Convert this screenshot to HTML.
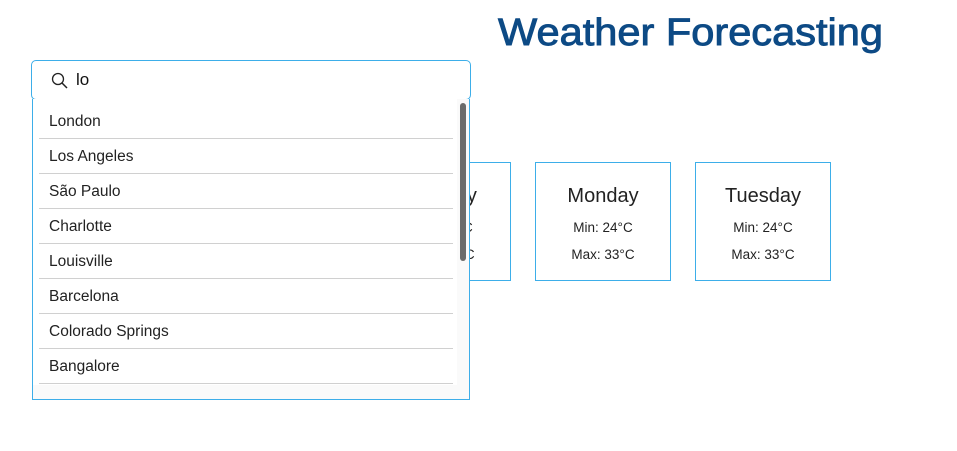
<!DOCTYPE html>
<html><head><meta charset="utf-8"><style>
*{box-sizing:border-box;margin:0;padding:0}
body{width:957px;height:451px;background:#fff;font-family:"Liberation Sans","DejaVu Sans",sans-serif;color:#222;position:relative;overflow:hidden}
.card{position:absolute;top:162px;width:136px;height:119px;border:1px solid #3daee9;text-align:center}
.card h3{font-weight:normal;font-size:20px;margin-top:22px;color:#222}
.card p{font-size:13.5px;margin-top:12px}
.card p+p{margin-top:12px}
#search{position:absolute;left:31px;top:60px;width:440px;height:40px;border:1px solid #3daee9;border-radius:5px;background:#fff}
#search span{position:absolute;left:44px;top:9px;font-size:17px;color:#111}
#dd{position:absolute;left:32px;top:99px;width:438px;height:301px;border:1px solid #3daee9;border-top:none;background:#fff;overflow:hidden}
.it{position:absolute;left:6px;width:414px;height:35px;border-bottom:1px solid #d0d0d0;font-size:15.5px;padding-left:10px;line-height:36px;color:#222}
#sb{position:absolute;left:427px;top:4px;width:6px;height:158px;border-radius:3px;background:#6b6b6b}
#track{position:absolute;left:424px;top:0;width:13px;height:301px;background:#fafafa}
#corner{position:absolute;left:0;top:286px;width:437px;height:15px;background:#fafafa}
</style></head><body>
<svg style="position:absolute;left:490px;top:4px" width="400" height="50"><text x="8" y="41" font-family="Liberation Sans, DejaVu Sans, sans-serif" font-size="38" font-weight="normal" fill="#0d4a85" stroke="#0d4a85" stroke-width="0.9" textLength="385" lengthAdjust="spacingAndGlyphs">Weather Forecasting</text></svg>
<div class="card" style="left:375px"><h3>Sunday</h3><p>Min: 24°C</p><p>Max: 33°C</p></div>
<div class="card" style="left:535px"><h3>Monday</h3><p>Min: 24°C</p><p>Max: 33°C</p></div>
<div class="card" style="left:695px"><h3>Tuesday</h3><p>Min: 24°C</p><p>Max: 33°C</p></div>
<div id="search"><svg style="position:absolute;left:19px;top:11px" width="18" height="18" viewBox="0 0 18 18"><circle cx="7" cy="7" r="5.5" fill="none" stroke="#222" stroke-width="1.3"/><line x1="11" y1="11" x2="16" y2="16" stroke="#222" stroke-width="1.5"/></svg><span>lo</span></div>
<div id="dd">
<div id="track"></div><div id="corner"></div><div id="sb"></div>
<div class="it" style="top:5px">London</div>
<div class="it" style="top:40px">Los Angeles</div>
<div class="it" style="top:75px">São Paulo</div>
<div class="it" style="top:110px">Charlotte</div>
<div class="it" style="top:145px">Louisville</div>
<div class="it" style="top:180px">Barcelona</div>
<div class="it" style="top:215px">Colorado Springs</div>
<div class="it" style="top:250px">Bangalore</div>
</div>
</body></html>
